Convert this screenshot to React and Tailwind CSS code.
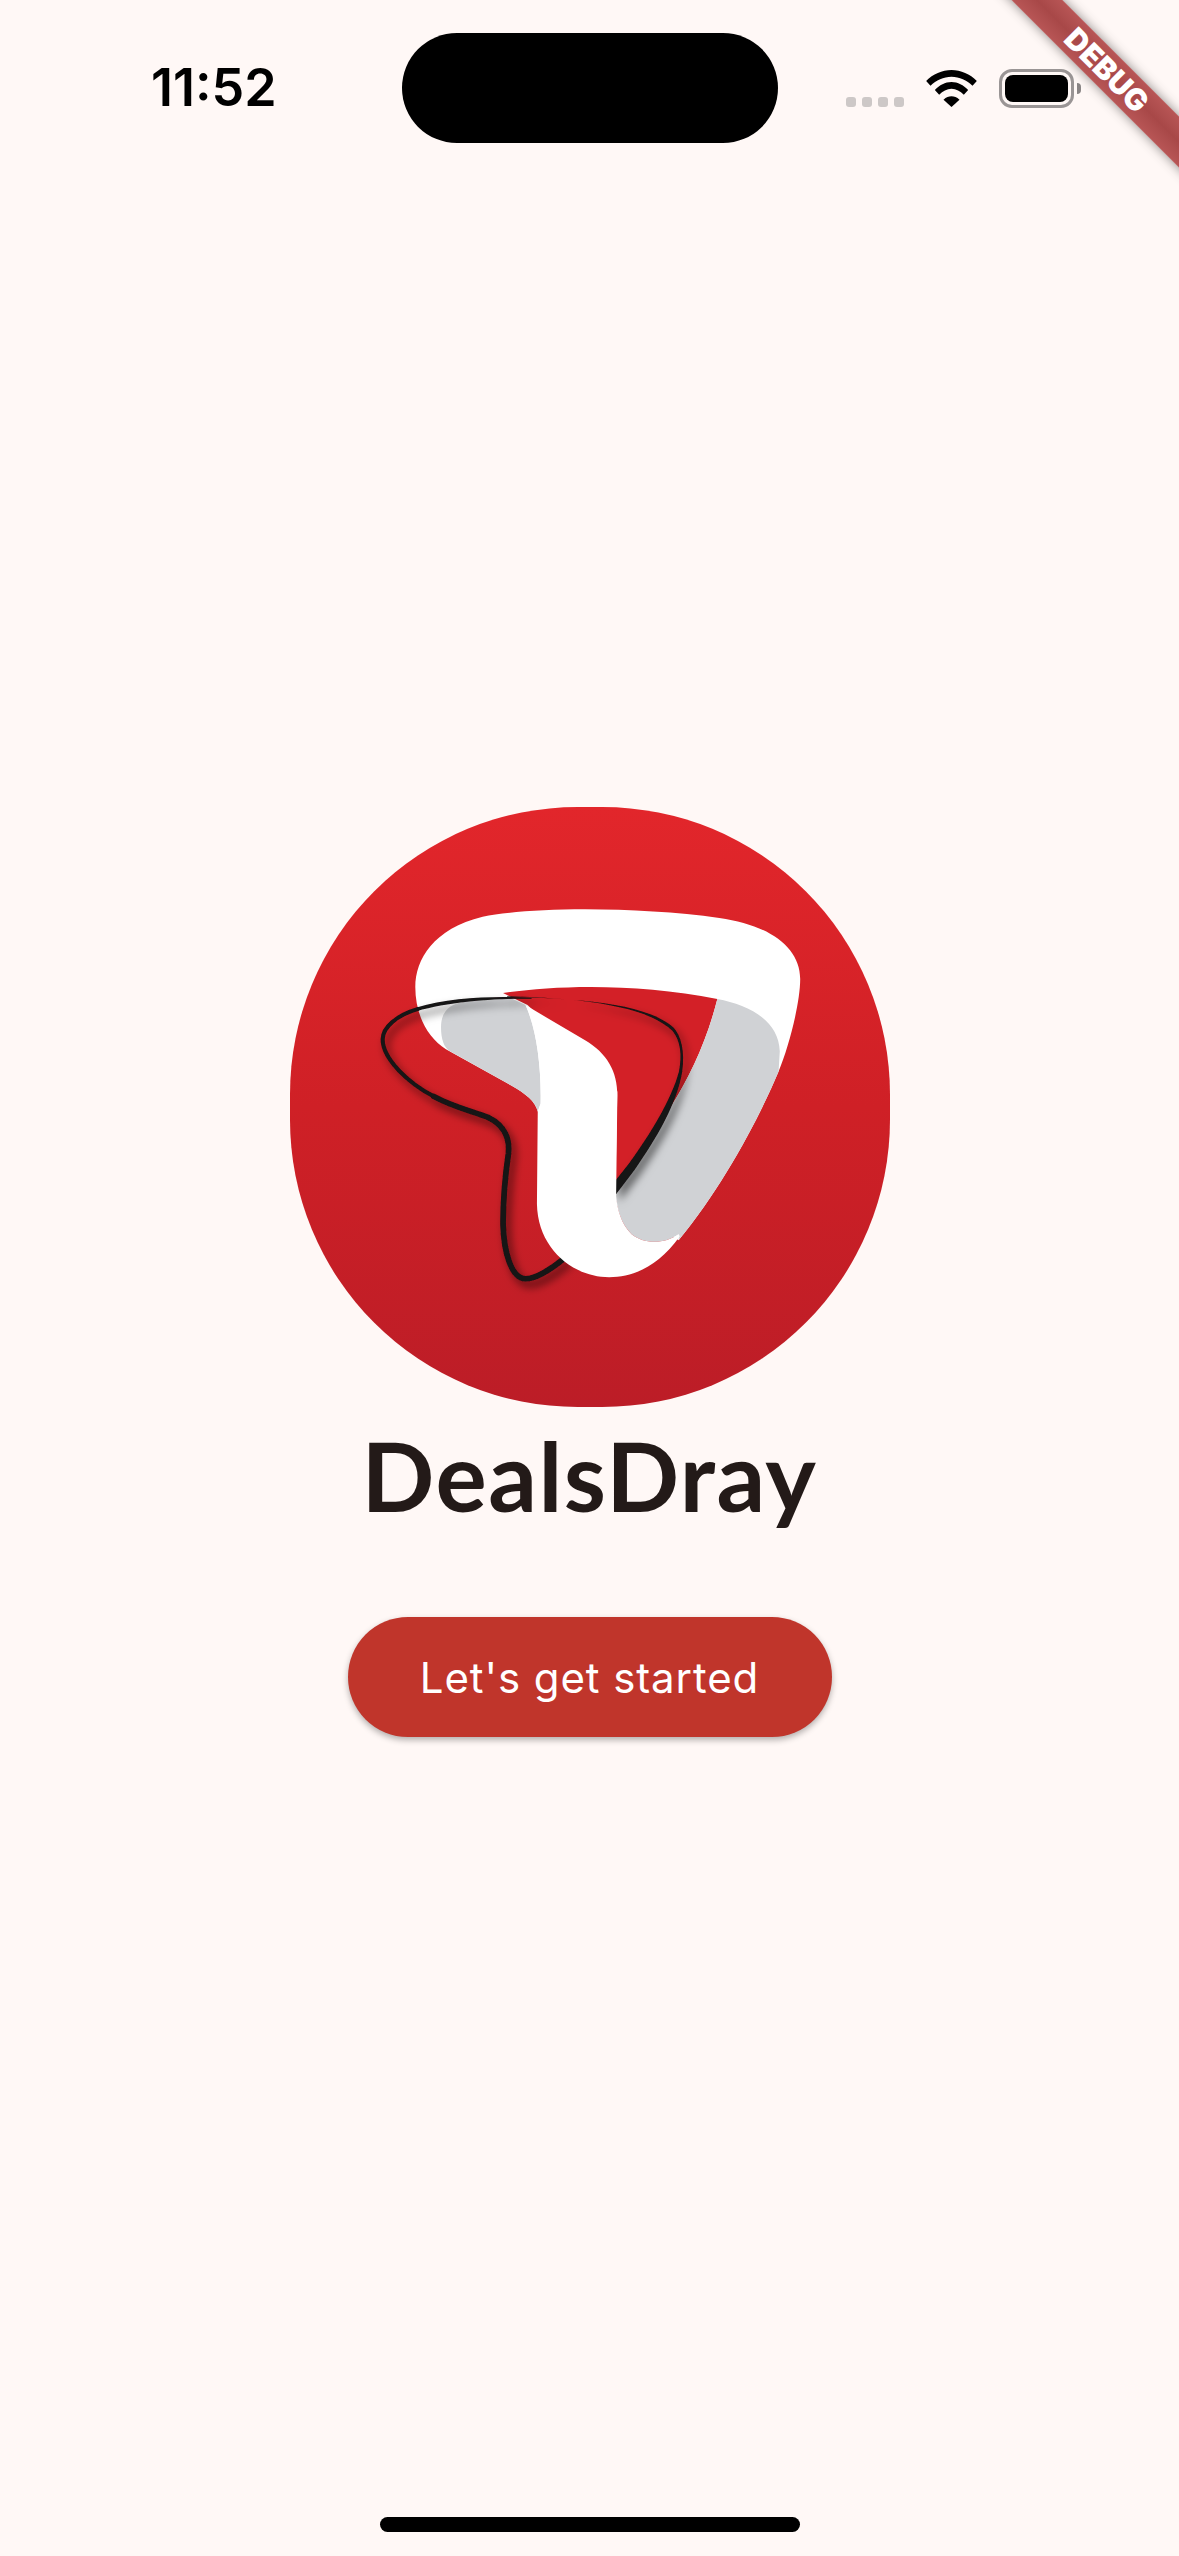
const LOGO_LINE_LOBE =
  'M360,545 C310,560 275,590 275,620 C275,670 340,730 400,762'
const LOGO_LINE_TAIL =
  'M400,762 C450,790 500,800 535,815 C575,835 587,870 583,905 C575,960 570,1020 570,1080 C572,1150 590,1215 625,1216 C650,1216 690,1190 720,1165'

function Logo() {
  // viewBox is in the units I traced the mark in, squashed to 600x600
  return (
    <svg width="600" height="600" viewBox="48 42 1470 1493" preserveAspectRatio="none" className="block">
      <defs>
        <linearGradient id="logoBg" x1="0" y1="0" x2="0" y2="1">
          <stop offset="0" stopColor="#e2262b" />
          <stop offset="0.5" stopColor="#cf2026" />
          <stop offset="1" stopColor="#bc1d27" />
        </linearGradient>
        <filter id="lineShadow" x="-20%" y="-20%" width="140%" height="140%">
          <feDropShadow dx="10" dy="14" stdDeviation="10" floodColor="#000" floodOpacity="0.6" />
        </filter>
      </defs>
      <rect x="48" y="42" width="1470" height="1493" rx="705" ry="715" fill="url(#logoBg)" />
      {/* white band */}
      <path
        fill="#fff"
        d="M355,490 C355,420 400,345 520,315 C640,290 900,290 1100,318 C1220,335 1298,390 1298,470 C1298,530 1270,640 1245,700 C1200,810 1110,985 1000,1120 L845,1010 L655,800 C650,775 625,755 590,735 L430,645 C385,615 355,560 355,490 Z"
      />
      {/* red inside of the band */}
      <path
        fill="#d32027"
        d="M570,505 C700,485 900,480 1095,520 C1070,620 1030,710 980,790 L845,1000 L850,750 L630,535 Z"
      />
      {/* grey folds */}
      <path
        fill="#d0d2d5"
        d="M418,590 C418,550 440,530 480,526 L590,518 L625,535 C650,590 664,680 662,780 L655,800 C650,775 625,755 590,735 L440,650 C425,640 418,620 418,590 Z"
      />
      <path
        fill="#d0d2d5"
        d="M1095,520 C1170,535 1245,570 1248,650 L1245,700 C1200,810 1110,985 1000,1120 L1000,1105 C965,1130 915,1130 885,1105 C860,1080 850,1045 845,1010 L980,790 C1030,710 1070,620 1095,520 Z"
      />
      {/* black outline, goes under the stem */}
      <g filter="url(#lineShadow)">
        <path
          fill="#161314"
          d="M640,517 C560,511 440,515 360,540 L358,550 C440,525 560,518 640,519 Z"
        />
        <path fill="none" stroke="#161314" strokeWidth="10" strokeLinecap="round" d={LOGO_LINE_LOBE} />
        <path fill="none" stroke="#161314" strokeWidth="14" strokeLinecap="round" d={LOGO_LINE_TAIL} />
        <path
          fill="#161314"
          d="M580,513 C800,518 930,545 985,599 C1005,624 1009,660 1001,700 C983,770 928,860 878,930 L845,972 L845,1008 L892,945 C947,865 996,780 1009,700 C1016,650 1006,610 987,590 C930,540 800,518 580,515 Z"
        />
      </g>
      {/* stem sits on top of everything */}
      <path
        fill="#fff"
        d="M625,535 L770,622 C825,655 850,700 850,760 L847,1010 C850,1045 860,1080 885,1105 C915,1130 965,1130 1000,1105 L1003,1110 C950,1185 890,1212 830,1212 C740,1212 655,1140 653,1030 L655,800 L662,780 C664,680 650,590 625,535 Z"
      />
    </svg>
  )
}

function WifiIcon() {
  return (
    <svg width="51" height="37" viewBox="0 0 152 111" className="block">
      <path d="M0,33 C20,12 48,0 76,0 C104,0 132,12 152,33 L139,47 C122,31 100,20 76,20 C52,20 30,31 13,47 Z" />
      <path d="M26,60 C40,45 57,36 76,36 C95,36 112,45 126,60 L113,74 C102,63 90,56 76,56 C62,56 50,63 39,74 Z" />
      <path d="M52,89 C60,82 68,79 76,79 C84,79 92,82 100,89 L76,111 Z" />
    </svg>
  )
}

function StatusBar() {
  return (
    <div className="flex items-center pt-[33px]">
      <div className="w-[402px] pl-[151px] font-['Inter',sans-serif] text-[52px] leading-none font-semibold text-black">
        11:52
      </div>
      <div className="w-[376px] h-[110px] rounded-[55px] bg-black" />
      <div className="flex items-end gap-[22px] ml-[68px] h-[39px]">
        <div className="flex gap-[6px]">
          <div className="w-[10px] h-[10px] mb-px rounded-[3px] bg-[#cdc8c7]" />
          <div className="w-[10px] h-[10px] mb-px rounded-[3px] bg-[#cdc8c7]" />
          <div className="w-[10px] h-[10px] mb-px rounded-[3px] bg-[#cdc8c7]" />
          <div className="w-[10px] h-[10px] mb-px rounded-[3px] bg-[#cdc8c7]" />
        </div>
        <div className="mb-px">
          <WifiIcon />
        </div>
        <div className="flex items-center">
          <div className="w-[75px] h-[39px] rounded-[13px] border-[3px] border-[#9a9595] p-[3px]">
            <div className="w-full h-full rounded-[8px] bg-black" />
          </div>
          <div className="w-[4px] h-[11px] ml-[3px] rounded-r-[4px] bg-[#8a8585]" />
        </div>
      </div>
    </div>
  )
}

export default function App() {
  return (
    <div className="relative flex flex-col w-[1179px] h-[2556px] overflow-hidden bg-[#fff8f6]">
      <StatusBar />

      <main className="flex flex-col items-center pt-[664px]">
        <Logo />
        <h1 className="mt-[10px] font-['Lato',sans-serif] text-[96px] leading-[115px] font-bold tracking-[1.5px] text-[#231a18]">
          DealsDray
        </h1>
        <button className="mt-[85px] w-[484px] h-[120px] rounded-[60px] bg-[#c0352b] shadow-[0_3px_6px_rgba(0,0,0,0.3)] font-['Inter',sans-serif] text-[42px] font-normal tracking-[0.9px] text-white">
          Let's get started
        </button>
      </main>

      <div className="mt-auto mb-[24px] self-center w-[420px] h-[15px] rounded-full bg-black" />

      {/* debug banner */}
      <div className="absolute left-[957px] top-[52px] flex items-center justify-center w-[300px] h-[36px] rotate-45 bg-[linear-gradient(to_bottom,#b85656,#a84848_50%,#b85656)] shadow-[0_0_12px_rgba(0,0,0,0.45)] font-['Inter',sans-serif] text-[30px] leading-none font-black text-white">
        DEBUG
      </div>
    </div>
  )
}
